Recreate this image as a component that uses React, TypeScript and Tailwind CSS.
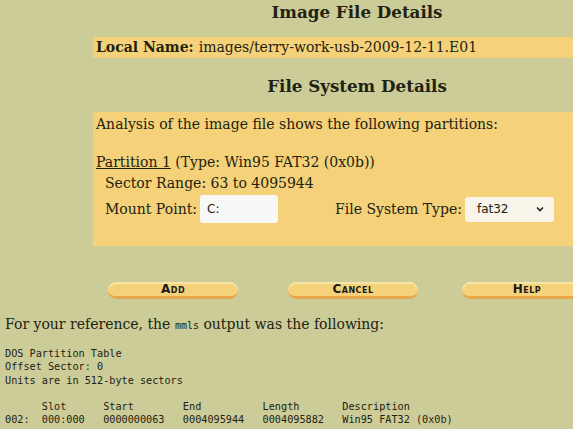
const serif = { fontFamily: '"DejaVu Serif", serif' };

const PillButton = ({ label }: { label: string }) => (
  <button
    type="button"
    className="flex h-[17px] w-[130px] shrink-0 items-center justify-center rounded-full border-b-[3px] border-[#e8a74c] bg-[#f5d27a] pb-[1px] shadow-[inset_0_2px_0_#f8e6a6] text-[12px] font-bold leading-none tracking-[0.5px] text-[#1a1a1a] [font-variant:small-caps]"
    style={{ fontFamily: '"DejaVu Sans", sans-serif' }}
  >
    {label}
  </button>
);

export default function App() {
  return (
    <div
      className="h-[429px] w-[573px] overflow-hidden bg-[#cccc99] text-[#222211]"
      style={serif}
    >
      <div className="flex">
        <div className="w-[93px] shrink-0" />
        <div className="w-[528px] shrink-0">
          <h2 className="pt-[2px] text-center text-[16.7px] font-bold leading-[20px]">
            Image File Details
          </h2>
          <div className="mt-[15px] flex h-[21px] items-center bg-[#f5d27a] px-[3px] text-[14px]">
            <span className="font-bold">Local Name:</span>
            <span className="ml-[5px]">images/terry-work-usb-2009-12-11.E01</span>
          </div>
          <h2 className="mt-[18px] text-center text-[16.7px] font-bold leading-[20px]">
            File System Details
          </h2>
          <div className="mt-[16px] h-[134px] bg-[#f5d27a] px-[3px] pt-[2px] text-[14px] leading-[21px]">
            <p>Analysis of the image file shows the following partitions:</p>
            <p className="mt-[17px]">
              <span className="underline">Partition 1</span> (Type: Win95 FAT32 (0x0b))
            </p>
            <p className="pl-[9px]">Sector Range: 63 to 4095944</p>
            <div className="mt-[1px] flex items-center pl-[9px]">
              <span>Mount Point:</span>
              <div
                className="ml-[3px] flex h-[28px] w-[78px] items-center rounded-[3px] bg-[#f8f8f6] px-[7px] text-[12px]"
                style={{ fontFamily: '"DejaVu Sans", sans-serif' }}
              >
                C:
              </div>
              <span className="ml-[57px]">File System Type:</span>
              <div
                className="ml-[3px] flex h-[25px] w-[89px] items-center justify-between rounded-[3px] bg-[#f9f5ea] pl-[12px] pr-[9px] text-[12px]"
                style={{ fontFamily: '"DejaVu Sans", sans-serif' }}
              >
                <span>fat32</span>
                <svg width="10" height="10" viewBox="0 0 10 10" fill="none">
                  <path d="M2 3.5 L5 6.5 L8 3.5" stroke="#222" strokeWidth="1.6" />
                </svg>
              </div>
            </div>
          </div>
          <div className="mt-[36px] flex items-start pl-[15px]">
            <PillButton label="Add" />
            <div className="ml-[50px] flex">
              <PillButton label="Cancel" />
            </div>
            <div className="ml-[44px] flex">
              <PillButton label="Help" />
            </div>
          </div>
        </div>
      </div>
      <p className="mt-[15px] px-[5px] text-[14px] leading-[20px]">
        For your reference, the{" "}
        <code
          className="text-[10px] text-[#222211]"
          style={{ fontFamily: '"DejaVu Sans Mono", monospace' }}
        >
          mmls
        </code>{" "}
        output was the following:
      </p>
      <pre
        className="mt-[11px] px-[5px] text-[10.2px] leading-[13.3px]"
        style={{ fontFamily: '"DejaVu Sans Mono", monospace' }}
      >
{`DOS Partition Table
Offset Sector: 0
Units are in 512-byte sectors

      Slot      Start        End          Length       Description
002:  000:000   0000000063   0004095944   0004095882   Win95 FAT32 (0x0b)`}
      </pre>
    </div>
  );
}
